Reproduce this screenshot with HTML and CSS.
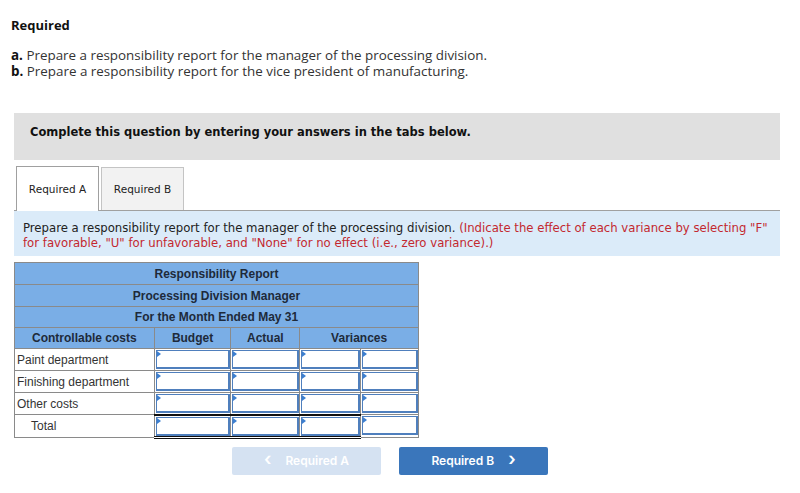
FILE: index.html
```html
<!DOCTYPE html>
<html>
<head>
<meta charset="utf-8">
<link rel="stylesheet" href="styles.css">
</head>
<body>
<div class="page">
  <h2 class="req-title">Required</h2>
  <div class="req-list">
    <p><b>a.</b> Prepare a responsibility report for the manager of the processing division.</p>
    <p><b>b.</b> Prepare a responsibility report for the vice president of manufacturing.</p>
  </div>

  <div class="notice">Complete this question by entering your answers in the tabs below.</div>

  <div class="tabs">
    <div class="tab active">Required A</div>
    <div class="tab">Required B</div>
  </div>

  <div class="instr">Prepare a responsibility report for the manager of the processing division. <span class="red">(Indicate the effect of each variance by selecting "F" for favorable, "U" for unfavorable, and "None" for no effect (i.e., zero variance).)</span></div>

  <table class="report">
    <colgroup>
      <col class="c1"><col class="c2"><col class="c3"><col class="c4"><col class="c5">
    </colgroup>
    <tr class="hd tall"><th colspan="5">Responsibility Report</th></tr>
    <tr class="hd tall"><th colspan="5">Processing Division Manager</th></tr>
    <tr class="hd"><th colspan="5">For the Month Ended May 31</th></tr>
    <tr class="hd"><th>Controllable costs</th><th>Budget</th><th>Actual</th><th colspan="2">Variances</th></tr>
    <tr>
      <td class="lbl">Paint department</td>
      <td class="in"><div class="box"></div></td>
      <td class="in"><div class="box"></div></td>
      <td class="in"><div class="box"></div></td>
      <td class="in"><div class="box"></div></td>
    </tr>
    <tr>
      <td class="lbl">Finishing department</td>
      <td class="in"><div class="box"></div></td>
      <td class="in"><div class="box"></div></td>
      <td class="in"><div class="box"></div></td>
      <td class="in"><div class="box"></div></td>
    </tr>
    <tr>
      <td class="lbl">Other costs</td>
      <td class="in"><div class="box"></div></td>
      <td class="in"><div class="box"></div></td>
      <td class="in"><div class="box"></div></td>
      <td class="in"><div class="box"></div></td>
    </tr>
    <tr class="total">
      <td class="lbl indent">Total</td>
      <td class="in tot"><div class="box"></div></td>
      <td class="in tot"><div class="box"></div></td>
      <td class="in tot"><div class="box"></div></td>
      <td class="in"><div class="box"></div></td>
    </tr>
  </table>

  <div class="nav">
    <button class="btn prev"><span class="chev">&lsaquo;</span>Required A</button>
    <button class="btn next">Required B<span class="chev r">&rsaquo;</span></button>
  </div>
</div>
</body>
</html>
```

FILE: styles.css
```css
* { box-sizing: border-box; }
body {
  margin: 0;
  background: #fff;
  font-family: "Liberation Sans", Arial, sans-serif;
  color: #222;
}
.page {
  padding: 17px 20px 0 14px;
  width: 800px;
}
.req-title {
  margin: 0 0 0 -3px;
  font-family: "Open Sans", "Liberation Sans", sans-serif;
  font-size: 13px;
  font-weight: 700;
  line-height: 16px;
  color: #111;
}
.req-list {
  margin: 14px 0 0 -3px;
  font-family: "Open Sans", "Liberation Sans", sans-serif;
  font-size: 13.4px;
  line-height: 16px;
  color: #333;
}
.req-list p { margin: 0; }
.req-list b { color: #111; }

.notice {
  margin-top: 34px;
  height: 47px;
  background: #e0e0e0;
  font-family: "DejaVu Sans", Verdana, sans-serif;
  font-weight: 700;
  font-size: 11.5px;
  color: #111;
  padding: 12px 0 0 16px;
}

.tabs {
  display: flex;
  gap: 2px;
  margin-top: 7px;
  padding-left: 2px;
  border-bottom: 1px solid #a0a0a0;
  height: 44px;
}
.tab {
  width: 83px;
  height: 43px;
  border: 1px solid #c4c4c4;
  border-bottom: none;
  background: #f2f2f2;
  font-family: "DejaVu Sans", Verdana, sans-serif;
  font-size: 10.5px;
  color: #222;
  display: flex;
  align-items: center;
  justify-content: center;
  align-self: flex-end;
}
.tab.active {
  background: #fff;
  border-color: #a0a0a0;
  margin-bottom: -1px;
  height: 45px;
}

.instr {
  background: #dbebf9;
  height: 45px;
  padding: 9px 8px 0 9px;
  font-family: "DejaVu Sans Condensed", "DejaVu Sans", sans-serif;
  font-size: 13px;
  line-height: 15px;
  color: #222;
}
.red { color: #c3282f; }

.report {
  margin-top: 6px;
  border-collapse: collapse;
  width: 405px;
  font-family: "Liberation Sans", Arial, sans-serif;
  font-size: 12px;
  color: #222;
}
.c1 { width: 140px; }
.c2 { width: 77px; }
.c3 { width: 69px; }
.c4 { width: 61px; }
.c5 { width: 58px; }
.report th {
  background: #7aaee6;
  border: 1px solid #8a8a8a;
  height: 21px;
  padding: 0;
  font-weight: 700;
  color: #1e2a3a;
}
.report tr.tall th { height: 22px; }
.report td {
  border: 1px solid #8a8a8a;
  height: 22px;
  padding: 0;
}
.report td.lbl {
  padding-left: 2px;
  color: #333;
}
.report td.indent { padding-left: 16px; }
.report td.in {
  padding: 1px 0 0 1px;
  vertical-align: top;
  border-left-color: #7f7f7f;
}
.box {
  height: 19px;
  border: 2px solid #4f7fbd;
  border-width: 1px 2px 2px 1px;
  background: #fff;
  position: relative;
}
.box::before {
  content: "";
  position: absolute;
  left: 0;
  top: 0;
  border-top: 3px solid transparent;
  border-bottom: 3px solid transparent;
  border-left: 4px solid #3c7fd0;
}
.report tr.total td.tot {
  border-top: 2px solid #111;
  border-bottom: 3px double #111;
}

.nav {
  display: flex;
  gap: 18px;
  margin: 8px 0 0 218px;
}
.btn {
  width: 149px;
  height: 28px;
  border: none;
  border-radius: 2px;
  color: #fff;
  font-family: "Inter", "Liberation Sans", sans-serif;
  font-size: 12px;
  font-weight: 600;
  display: flex;
  align-items: center;
  justify-content: center;
  padding: 0;
}
.btn.prev { background: #d5e2f2; }
.btn.next { background: #3a76bb; }
.chev {
  font-size: 18px;
  line-height: 1;
  margin-right: 14px;
  margin-top: -3px;
}
.chev.r { margin-right: 0; margin-left: 14px; }
```
